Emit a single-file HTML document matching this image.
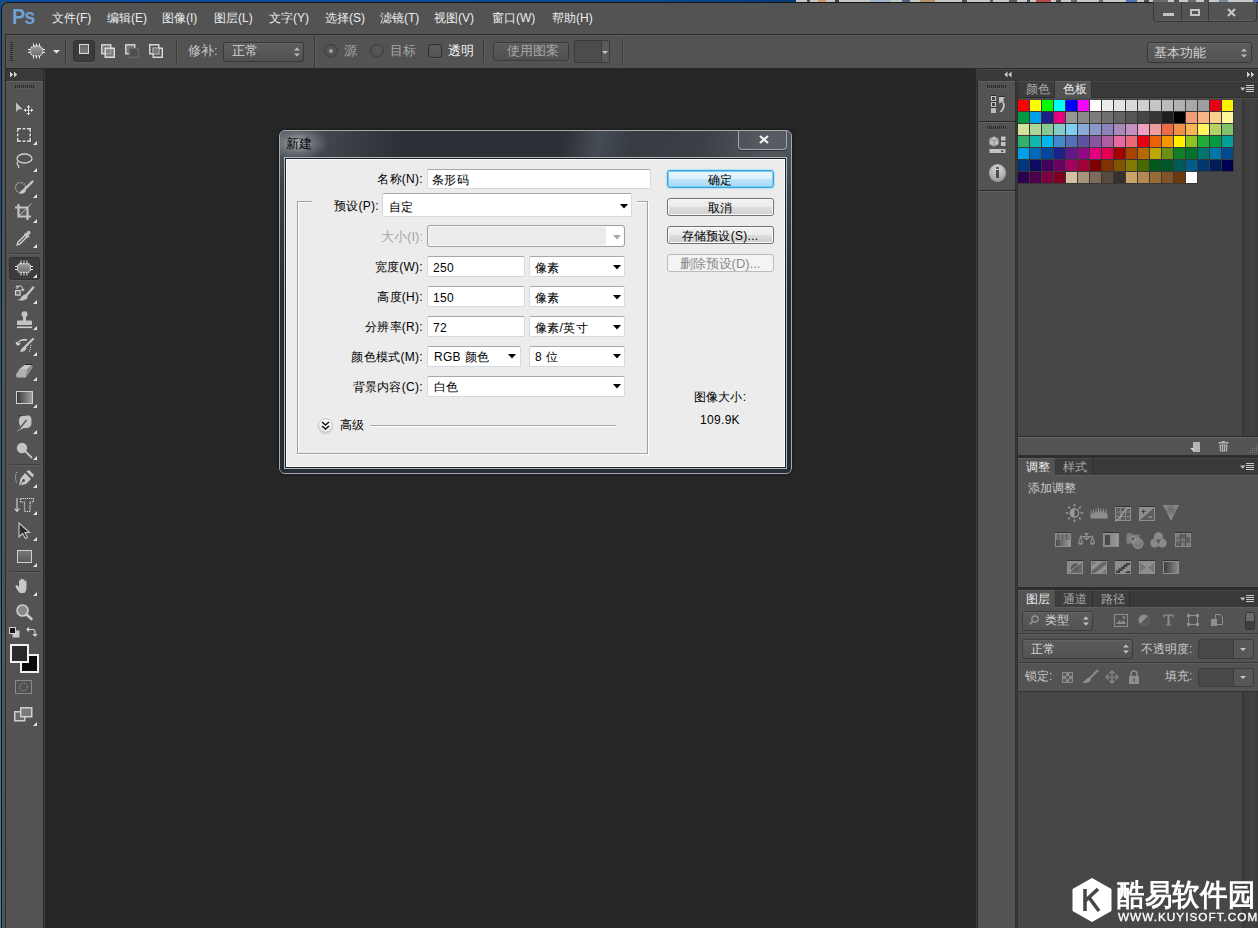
<!DOCTYPE html><html><head><meta charset="utf-8"><style>
*{margin:0;padding:0;box-sizing:border-box}
html,body{width:1258px;height:928px;overflow:hidden;background:#535353}
body{position:relative;font-family:"Liberation Sans",sans-serif;font-size:12px;color:#ddd}
div{position:absolute}
.t{white-space:nowrap;line-height:14px;font-size:13px}
svg{position:absolute;overflow:visible}
</style></head><body>
<div style="left:0px;top:0px;width:796px;height:2px;background:linear-gradient(90deg,#0b4f9c,#0a4a94 80%,#073a78)"></div>
<div style="left:796px;top:0px;width:462px;height:2px;background:#c8c8c8"></div>
<div style="left:807px;top:0px;width:3px;height:2px;background:#333;opacity:0.8"></div>
<div style="left:818px;top:0px;width:8px;height:2px;background:#c89050;opacity:0.8"></div>
<div style="left:835px;top:0px;width:4px;height:2px;background:#222;opacity:0.8"></div>
<div style="left:870px;top:0px;width:21px;height:2px;background:#9ab0c8;opacity:0.8"></div>
<div style="left:902px;top:0px;width:8px;height:2px;background:#3a4a70;opacity:0.8"></div>
<div style="left:920px;top:0px;width:15px;height:2px;background:#b08850;opacity:0.8"></div>
<div style="left:962px;top:0px;width:5px;height:2px;background:#333;opacity:0.8"></div>
<div style="left:990px;top:0px;width:3px;height:2px;background:#444;opacity:0.8"></div>
<div style="left:1009px;top:0px;width:8px;height:2px;background:#444;opacity:0.8"></div>
<div style="left:1027px;top:0px;width:3px;height:2px;background:#333;opacity:0.8"></div>
<div style="left:1036px;top:0px;width:15px;height:2px;background:#b03030;opacity:0.8"></div>
<div style="left:1056px;top:0px;width:5px;height:2px;background:#333;opacity:0.8"></div>
<div style="left:1071px;top:0px;width:6px;height:2px;background:#555;opacity:0.8"></div>
<div style="left:1099px;top:0px;width:4px;height:2px;background:#555;opacity:0.8"></div>
<div style="left:1126px;top:0px;width:11px;height:2px;background:#3060b0;opacity:0.8"></div>
<div style="left:1144px;top:0px;width:5px;height:2px;background:#333;opacity:0.8"></div>
<div style="left:1153px;top:0px;width:15px;height:2px;background:#555;opacity:0.8"></div>
<div style="left:1174px;top:0px;width:5px;height:2px;background:#333;opacity:0.8"></div>
<div style="left:1188px;top:0px;width:8px;height:2px;background:#555;opacity:0.8"></div>
<div style="left:1204px;top:0px;width:5px;height:2px;background:#333;opacity:0.8"></div>
<div style="left:1219px;top:0px;width:9px;height:2px;background:#6a7a90;opacity:0.8"></div>
<div style="left:1253px;top:0px;width:5px;height:2px;background:#3060b0;opacity:0.8"></div>
<div style="left:0px;top:0px;width:2px;height:928px;background:linear-gradient(180deg,#0b4f9c,#1a6490 50%,#3a8a98)"></div>
<div style="left:1px;top:2px;width:1257px;height:926px;background:#141414;border-top-left-radius:7px"></div>
<div style="left:2px;top:3px;width:1256px;height:925px;background:#535353;border-top-left-radius:6px"></div>
<div class="t" style="left:12px;top:6px;font:bold 22px/22px 'Liberation Sans',sans-serif;color:#6ea2d6;letter-spacing:-1px;transform:scaleX(0.9);transform-origin:0 0">Ps</div>
<div class="t" style="left:52px;top:11px;color:#ececec;font-size:12px;top:11px">文件(F)</div>
<div class="t" style="left:107px;top:11px;color:#ececec;font-size:12px;top:11px">编辑(E)</div>
<div class="t" style="left:162px;top:11px;color:#ececec;font-size:12px;top:11px">图像(I)</div>
<div class="t" style="left:214px;top:11px;color:#ececec;font-size:12px;top:11px">图层(L)</div>
<div class="t" style="left:269px;top:11px;color:#ececec;font-size:12px;top:11px">文字(Y)</div>
<div class="t" style="left:325px;top:11px;color:#ececec;font-size:12px;top:11px">选择(S)</div>
<div class="t" style="left:380px;top:11px;color:#ececec;font-size:12px;top:11px">滤镜(T)</div>
<div class="t" style="left:434px;top:11px;color:#ececec;font-size:12px;top:11px">视图(V)</div>
<div class="t" style="left:492px;top:11px;color:#ececec;font-size:12px;top:11px">窗口(W)</div>
<div class="t" style="left:552px;top:11px;color:#ececec;font-size:12px;top:11px">帮助(H)</div>
<div style="left:1153px;top:2px;width:104px;height:20px;border:1px solid #383838;border-top:none;border-radius:0 0 4px 4px;background:#535353;box-shadow:inset 0 -1px 0 #5e5e5e"></div>
<div style="left:1181px;top:2px;width:1px;height:19px;background:#383838"></div>
<div style="left:1208px;top:2px;width:1px;height:19px;background:#383838"></div>
<div style="left:1163px;top:13px;width:11px;height:3px;background:#c4c4c4"></div>
<div style="left:1190px;top:9px;width:10px;height:7px;border:2px solid #c4c4c4"></div>
<svg style="left:1227px;top:8px;" width="9" height="9" viewBox="0 0 9 9"><path d="M1 1L8 8M8 1L1 8" stroke="#c4c4c4" stroke-width="2.2"/></svg>
<div style="left:5px;top:34px;width:1253px;height:35px;background:#535353;border-top:1px solid #2a2a2a;border-left:1px solid #2a2a2a;box-shadow:inset 1px 1px 0 #5c5c5c"></div>
<div style="left:5px;top:68px;width:1253px;height:1px;background:#2a2a2a"></div>
<svg style="left:10px;top:42px;" width="3" height="20" viewBox="0 0 3 20"><rect x="0" y="0" width="3" height="1" fill="#2e2e2e"/><rect x="0" y="2" width="3" height="1" fill="#2e2e2e"/><rect x="0" y="4" width="3" height="1" fill="#2e2e2e"/><rect x="0" y="6" width="3" height="1" fill="#2e2e2e"/><rect x="0" y="8" width="3" height="1" fill="#2e2e2e"/><rect x="0" y="10" width="3" height="1" fill="#2e2e2e"/><rect x="0" y="12" width="3" height="1" fill="#2e2e2e"/><rect x="0" y="14" width="3" height="1" fill="#2e2e2e"/><rect x="0" y="16" width="3" height="1" fill="#2e2e2e"/><rect x="0" y="18" width="3" height="1" fill="#2e2e2e"/></svg>
<svg style="left:28px;top:43px;" width="17" height="16" viewBox="0 0 17 16"><defs><linearGradient id="pg" x1="0" y1="0" x2="0" y2="1"><stop offset="0" stop-color="#9a9a9a"/><stop offset="1" stop-color="#6e6e6e"/></linearGradient></defs><rect x="2.2" y="3.2" width="12.6" height="9.6" rx="4.3" fill="url(#pg)" stroke="#e6e6e6" stroke-width="1.2" stroke-dasharray="1.6 0.9"/><path d="M5.5 0.5v2.6M8.5 0.5v2.6M11.5 0.5v2.6M5.5 12.9v2.6M8.5 12.9v2.6M11.5 12.9v2.6M0 6.5h2.2M0 9.5h2.2M14.8 6.5h2.2M14.8 9.5h2.2" stroke="#ececec" stroke-width="1"/></svg>
<svg style="left:53px;top:50px;" width="7" height="4" viewBox="0 0 7 4"><path d="M0 0h7l-3.5 3.5z" fill="#e6e6e6"/></svg>
<div style="left:65px;top:40px;width:1px;height:23px;background:#3a3a3a;box-shadow:1px 0 0 #5e5e5e"></div>
<div style="left:73px;top:40px;width:22px;height:22px;background:#3b3b3b;border:1px solid #333;border-radius:3px;box-shadow:0 1px 0 #5e5e5e"></div>
<div style="left:79px;top:44px;width:10px;height:10px;background:linear-gradient(#6a6a6a,#7a7a7a);border:1.5px solid #dadada"></div>
<svg style="left:101px;top:44px;" width="14" height="14" viewBox="0 0 14 14"><rect x="0.75" y="0.75" width="9" height="9" fill="#7a7a7a" stroke="#cfcfcf" stroke-width="1.5"/><rect x="4.25" y="4.25" width="9" height="9" fill="#8a8a8a" fill-opacity="0.7" stroke="#dcdcdc" stroke-width="1.5"/></svg>
<svg style="left:125px;top:44px;" width="14" height="14" viewBox="0 0 14 14"><rect x="0.75" y="0.75" width="9" height="9" fill="#777" stroke="#d0d0d0" stroke-width="1.5"/><rect x="4.25" y="4.25" width="9" height="9" fill="#4e4e4e" stroke="#6e6e6e" stroke-width="1.2"/></svg>
<svg style="left:149px;top:44px;" width="14" height="14" viewBox="0 0 14 14"><rect x="0.75" y="0.75" width="9" height="9" fill="none" stroke="#d6d6d6" stroke-width="1.5"/><rect x="4.25" y="4.25" width="9" height="9" fill="none" stroke="#d6d6d6" stroke-width="1.5"/><rect x="4.25" y="4.25" width="5.5" height="5.5" fill="#7a7a7a"/></svg>
<div style="left:176px;top:40px;width:1px;height:23px;background:#3a3a3a;box-shadow:1px 0 0 #5e5e5e"></div>
<div class="t" style="left:188px;top:44px;color:#c6c6c6;top:44px">修补:</div>
<div style="left:223px;top:42px;width:81px;height:20px;background:linear-gradient(#5e5e5e,#505050);border:1px solid #383838;border-radius:3px;box-shadow:inset 0 1px 0 #666"></div>
<div class="t" style="left:232px;top:44px;color:#d4d4d4;top:44px">正常</div>
<svg style="left:294px;top:47px;" width="6" height="10" viewBox="0 0 6 10"><path d="M0 3.5L3 0.5L6 3.5z M0 6.5L3 9.5L6 6.5z" fill="#bdbdbd"/></svg>
<div style="left:314px;top:35px;width:1px;height:33px;background:#3a3a3a;box-shadow:1px 0 0 #5e5e5e"></div>
<div style="left:324px;top:44px;width:14px;height:14px;border-radius:50%;background:radial-gradient(circle at 50% 40%,#5a5a5a,#4a4a4a);border:1px solid #3c3c3c;box-shadow:0 1px 0 #5e5e5e"></div>
<div style="left:329px;top:49px;width:4px;height:4px;border-radius:50%;background:#a0a0a0"></div>
<div class="t" style="left:344px;top:44px;color:#a6a6a6;top:44px">源</div>
<div style="left:370px;top:44px;width:14px;height:14px;border-radius:50%;background:radial-gradient(circle at 50% 40%,#5a5a5a,#4a4a4a);border:1px solid #3c3c3c;box-shadow:0 1px 0 #5e5e5e"></div>
<div class="t" style="left:390px;top:44px;color:#a6a6a6;top:44px">目标</div>
<div style="left:428px;top:44px;width:14px;height:14px;background:linear-gradient(#5c5c5c,#545454);border:1px solid #2e2e2e;border-radius:3px;box-shadow:0 1px 0 #606060"></div>
<div class="t" style="left:448px;top:44px;color:#f4f4f4;top:44px">透明</div>
<div style="left:483px;top:40px;width:1px;height:23px;background:#3a3a3a;box-shadow:1px 0 0 #5e5e5e"></div>
<div style="left:493px;top:42px;width:76px;height:19px;background:linear-gradient(#5a5a5a,#505050);border:1px solid #3a3a3a;border-radius:3px;box-shadow:inset 0 1px 0 #626262"></div>
<div class="t" style="left:507px;top:44px;color:#a8a8a8;top:44px">使用图案</div>
<div style="left:574px;top:40px;width:36px;height:23px;background:#4c4c4c;border:1px solid #3a3a3a;border-radius:2px"></div>
<div style="left:601px;top:41px;width:8px;height:21px;background:#5a5a5a;border-left:1px solid #3e3e3e"></div>
<svg style="left:602px;top:51px;" width="6" height="3" viewBox="0 0 6 3"><path d="M0 0h6l-3 3z" fill="#c8c8c8"/></svg>
<div style="left:622px;top:38px;width:1px;height:28px;background:#3a3a3a;box-shadow:1px 0 0 #5e5e5e"></div>
<div style="left:1147px;top:42px;width:105px;height:21px;background:linear-gradient(#5e5e5e,#525252);border:1px solid #383838;border-radius:3px;box-shadow:inset 0 1px 0 #666"></div>
<div class="t" style="left:1154px;top:45px;color:#d4d4d4;top:46px">基本功能</div>
<svg style="left:1241px;top:48px;" width="6" height="10" viewBox="0 0 6 10"><path d="M0 3.5L3 0.5L6 3.5z M0 6.5L3 9.5L6 6.5z" fill="#bdbdbd"/></svg>
<div style="left:2px;top:69px;width:3px;height:859px;background:#535353"></div>
<div style="left:5px;top:69px;width:40px;height:859px;background:#2c2c2c"></div>
<div style="left:6px;top:69px;width:37px;height:12px;background:#3a3a3a;border-radius:2px"></div>
<svg style="left:10px;top:71px;" width="8" height="7" viewBox="0 0 8 7"><path d="M0 0L3.5 3.3L0 6.6z M4 0L7.5 3.3L4 6.6z" fill="#cfcfcf"/><path d="M0 0L3.5 3.3M4 0L7.5 3.3" stroke="#151515" stroke-width="0.8"/></svg>
<div style="left:6px;top:81px;width:37px;height:847px;background:#535353;border-top:1px solid #626262"></div>
<svg style="left:15px;top:85px;" width="20" height="4" viewBox="0 0 20 4"><rect x="0" y="0" width="1" height="3" fill="#2a2a2a"/><rect x="0" y="3" width="1" height="1" fill="#626262"/><rect x="2" y="0" width="1" height="3" fill="#2a2a2a"/><rect x="2" y="3" width="1" height="1" fill="#626262"/><rect x="4" y="0" width="1" height="3" fill="#2a2a2a"/><rect x="4" y="3" width="1" height="1" fill="#626262"/><rect x="6" y="0" width="1" height="3" fill="#2a2a2a"/><rect x="6" y="3" width="1" height="1" fill="#626262"/><rect x="8" y="0" width="1" height="3" fill="#2a2a2a"/><rect x="8" y="3" width="1" height="1" fill="#626262"/><rect x="10" y="0" width="1" height="3" fill="#2a2a2a"/><rect x="10" y="3" width="1" height="1" fill="#626262"/><rect x="12" y="0" width="1" height="3" fill="#2a2a2a"/><rect x="12" y="3" width="1" height="1" fill="#626262"/><rect x="14" y="0" width="1" height="3" fill="#2a2a2a"/><rect x="14" y="3" width="1" height="1" fill="#626262"/><rect x="16" y="0" width="1" height="3" fill="#2a2a2a"/><rect x="16" y="3" width="1" height="1" fill="#626262"/><rect x="18" y="0" width="1" height="3" fill="#2a2a2a"/><rect x="18" y="3" width="1" height="1" fill="#626262"/></svg>
<div style="left:45px;top:69px;width:929px;height:859px;background:#262626"></div>
<div style="left:44px;top:69px;width:1px;height:859px;background:#383838"></div>
<div style="left:45px;top:69px;width:1px;height:859px;background:#2a2a2a"></div>
<svg style="left:15px;top:101px;" width="19" height="15" viewBox="0 0 19 15"><path d="M1 0.5L1 11L3.8 8.2L8.5 8.2z" fill="#bdbdbd"/><path d="M1 0.5L8.5 8.2" stroke="#1e1e1e" stroke-width="0.9"/><path d="M13.5 4.5V14M9 9.25H18" stroke="#1e1e1e" stroke-width="2.4" opacity="0.5"/><path d="M13.5 4.5V14M9 9.25H18" stroke="#e4e4e4" stroke-width="1"/><path d="M11.5 6.5L13.5 4.3L15.5 6.5zM11.5 12L13.5 14.2L15.5 12zM11 7.25L8.8 9.25L11 11.25zM16 7.25L18.2 9.25L16 11.25z" fill="#e4e4e4"/></svg>
<svg style="left:17px;top:128px;" width="14" height="14" viewBox="0 0 14 14"><path d="M0.75 4V0.75H4M10 0.75H13.25V4M13.25 10V13.25H10M4 13.25H0.75V10M5.5 0.75H8.5M5.5 13.25H8.5M0.75 5.5V8.5M13.25 5.5V8.5" fill="none" stroke="#1a1a1a" stroke-width="1.5" transform="translate(0.6,0.6)" opacity="0.6"/><path d="M0.75 4V0.75H4M10 0.75H13.25V4M13.25 10V13.25H10M4 13.25H0.75V10M5.5 0.75H8.5M5.5 13.25H8.5M0.75 5.5V8.5M13.25 5.5V8.5" fill="none" stroke="#dedede" stroke-width="1.5"/></svg>
<svg style="left:33px;top:141px;" width="4" height="4" viewBox="0 0 4 4"><path d="M4 0V4H0z" fill="#e4e4e4"/></svg>
<svg style="left:15px;top:153px;" width="18" height="16" viewBox="0 0 18 16"><ellipse cx="9.5" cy="5.5" rx="7.5" ry="4.5" fill="none" stroke="#cfcfcf" stroke-width="1.3"/><path d="M3 9C1.5 10 2 12 3.5 12.5C4.5 13 3.5 14.5 3 15" fill="none" stroke="#cfcfcf" stroke-width="1.2"/></svg>
<svg style="left:33px;top:168px;" width="4" height="4" viewBox="0 0 4 4"><path d="M4 0V4H0z" fill="#e4e4e4"/></svg>
<svg style="left:15px;top:180px;" width="19" height="15" viewBox="0 0 19 15"><circle cx="5.5" cy="7.5" r="5" fill="none" stroke="#d0d0d0" stroke-width="1.2" stroke-dasharray="1 1.2"/><path d="M17.5 1.5L9.5 9.5" stroke="#c8c8c8" stroke-width="2.4" stroke-linecap="round"/><path d="M9.5 9C7 9 5 11.5 4.5 14C7.5 14 10 13 11 11z" fill="#c8c8c8"/></svg>
<svg style="left:33px;top:194px;" width="4" height="4" viewBox="0 0 4 4"><path d="M4 0V4H0z" fill="#e4e4e4"/></svg>
<svg style="left:15px;top:204px;" width="17" height="16" viewBox="0 0 17 16"><rect x="5" y="4.5" width="6.5" height="6.5" fill="#5e5e5e"/><path d="M3.5 0V12.5H16M0 3.5H12.5V16" fill="none" stroke="#c4c4c4" stroke-width="2.2"/><path d="M4.5 11.5L16.5 -0.5" stroke="#c4c4c4" stroke-width="0.9"/></svg>
<svg style="left:33px;top:219px;" width="4" height="4" viewBox="0 0 4 4"><path d="M4 0V4H0z" fill="#e4e4e4"/></svg>
<svg style="left:16px;top:230px;" width="15" height="16" viewBox="0 0 15 16"><path d="M1 15L2 12L9 5L11 7L4 14z" fill="#6a6a6a" stroke="#e0e0e0" stroke-width="1.1"/><path d="M8 4L12 8L13.5 6.5L12.5 5.5L14 4C15 3 14.5 1.5 13.5 1C12.5 0.5 11.5 1 11 2L9.5 3.5L9 3z" fill="#c0c0c0"/></svg>
<svg style="left:33px;top:244px;" width="4" height="4" viewBox="0 0 4 4"><path d="M4 0V4H0z" fill="#e4e4e4"/></svg>
<div style="left:10px;top:253px;width:31px;height:1px;background:#3e3e3e;box-shadow:0 1px 0 #5e5e5e"></div>
<div style="left:9px;top:257px;width:31px;height:23px;background:#3c3c3c;border:1px solid #323232;border-radius:3px;box-shadow:0 1px 0 #5e5e5e"></div>
<svg style="left:15px;top:260px;" width="18" height="16" viewBox="0 0 18 16"><rect x="2.6" y="3.6" width="12.8" height="8.8" rx="3" fill="url(#pg)" stroke="#e0e0e0" stroke-width="1.2" stroke-dasharray="1.5 0.9"/><path d="M6 0.5v3M9 0.5v3M12 0.5v3M6 12.5v3M9 12.5v3M12 12.5v3M0 6.5h2.6M0 9.5h2.6M15.4 6.5h2.6M15.4 9.5h2.6" stroke="#e6e6e6" stroke-width="1"/></svg>
<svg style="left:33px;top:274px;" width="4" height="4" viewBox="0 0 4 4"><path d="M4 0V4H0z" fill="#e4e4e4"/></svg>
<svg style="left:15px;top:285px;" width="19" height="17" viewBox="0 0 19 17"><rect x="0.6" y="5.6" width="4.5" height="4.5" fill="#6a6a6a" stroke="#dedede" stroke-width="1.1"/><path d="M2 4C2 1.8 3.5 0.8 5.5 1C7 1.2 7.8 2.5 7.8 5" fill="none" stroke="#dedede" stroke-width="1"/><path d="M6.3 4L7.8 6L9.3 4" fill="none" stroke="#dedede" stroke-width="1"/><path d="M1 2.5L2 0.5L3.5 2.5" fill="none" stroke="#dedede" stroke-width="0.8"/><path d="M18.2 2.5L11.8 10" stroke="#c4c4c4" stroke-width="2.4" stroke-linecap="round"/><path d="M11.8 9.8C9.5 9 7 10.8 6 12.8C5.3 14 4.3 14.8 2.3 15C6.5 16.3 10.8 15.6 12.8 12.5z" fill="#c4c4c4"/></svg>
<svg style="left:33px;top:300px;" width="4" height="4" viewBox="0 0 4 4"><path d="M4 0V4H0z" fill="#e4e4e4"/></svg>
<svg style="left:16px;top:311px;" width="17" height="18" viewBox="0 0 17 18"><circle cx="8.5" cy="3.2" r="3" fill="#c4c4c4"/><path d="M7 5.5H10V9.5H14.5C15.5 9.5 16 10 16 11V14H1V11C1 10 1.5 9.5 2.5 9.5H7z" fill="#c4c4c4"/><rect x="1" y="15.5" width="15" height="1.6" fill="#d0d0d0"/></svg>
<svg style="left:33px;top:326px;" width="4" height="4" viewBox="0 0 4 4"><path d="M4 0V4H0z" fill="#e4e4e4"/></svg>
<svg style="left:15px;top:338px;" width="19" height="15" viewBox="0 0 19 15"><path d="M12 2C7 1 3 3 2.5 6M1 4L2.5 7L5.5 5.5" fill="none" stroke="#dedede" stroke-width="1.3"/><path d="M18 1L10 9" stroke="#c8c8c8" stroke-width="2.2" stroke-linecap="round"/><path d="M10 8.5C7.5 8.5 6 11 5 14C8 14 10.5 13 11.5 10.5z" fill="#c8c8c8"/><path d="M16 7L14.5 14" stroke="#e0e0e0" stroke-width="1" stroke-dasharray="1 1"/></svg>
<svg style="left:33px;top:352px;" width="4" height="4" viewBox="0 0 4 4"><path d="M4 0V4H0z" fill="#e4e4e4"/></svg>
<svg style="left:15px;top:364px;" width="18" height="14" viewBox="0 0 18 14"><path d="M4.5 5L10 0.5H17.5L12.5 5z" fill="#c8c8c8"/><path d="M4.5 5H12.5L11 13.5H1.5L1 10.5z" fill="#b0b0b0"/><path d="M12.5 5L17.5 0.5V4L11 13.5z" fill="#8e8e8e"/><path d="M10 0.5H17.5" stroke="#222" stroke-width="1"/></svg>
<svg style="left:33px;top:377px;" width="4" height="4" viewBox="0 0 4 4"><path d="M4 0V4H0z" fill="#e4e4e4"/></svg>
<div style="left:16px;top:391px;width:17px;height:13px;border:1px solid #cfcfcf;background:linear-gradient(90deg,#3a3a3a,#a0a0a0)"></div>
<svg style="left:33px;top:404px;" width="4" height="4" viewBox="0 0 4 4"><path d="M4 0V4H0z" fill="#e4e4e4"/></svg>
<svg style="left:16px;top:415px;" width="16" height="17" viewBox="0 0 16 17"><path d="M3 6C3 2 5 0.5 9 0.5H12C14.5 0.5 15.5 2 15.5 5V8C15.5 11 13.5 13 10 13H8L1 16.5L4.5 11C3.5 10 3 8.5 3 6z" fill="#c4c4c4"/><path d="M10.5 5L2.5 15" stroke="#535353" stroke-width="1.3"/><path d="M2 0.5H10" stroke="#222" stroke-width="0.8" opacity="0.6"/></svg>
<svg style="left:33px;top:430px;" width="4" height="4" viewBox="0 0 4 4"><path d="M4 0V4H0z" fill="#e4e4e4"/></svg>
<svg style="left:16px;top:442px;" width="17" height="17" viewBox="0 0 17 17"><circle cx="6" cy="6" r="5.2" fill="#c4c4c4"/><path d="M9.5 9.5L15.5 15.5" stroke="#c4c4c4" stroke-width="1.8" stroke-linecap="round"/></svg>
<svg style="left:33px;top:456px;" width="4" height="4" viewBox="0 0 4 4"><path d="M4 0V4H0z" fill="#e4e4e4"/></svg>
<div style="left:10px;top:464px;width:31px;height:1px;background:#3e3e3e;box-shadow:0 1px 0 #5e5e5e"></div>
<svg style="left:14px;top:470px;" width="20" height="17" viewBox="0 0 20 17"><path d="M11 3L17 9L12 14L5 15.5L6.5 8.5z" fill="#c8c8c8"/><path d="M12.5 1.5L15 0L20 5L18.5 7.5z" fill="#c8c8c8"/><circle cx="9.5" cy="10.5" r="1.5" fill="#535353"/><path d="M6 15L9.5 10.5" stroke="#535353" stroke-width="0.8"/><path d="M3 2C1 5 1 9 3 13" stroke="#d8d8d8" stroke-width="1" stroke-dasharray="1 1.2" fill="none"/></svg>
<svg style="left:33px;top:484px;" width="4" height="4" viewBox="0 0 4 4"><path d="M4 0V4H0z" fill="#e4e4e4"/></svg>
<svg style="left:14px;top:497px;" width="21" height="16" viewBox="0 0 21 16"><path d="M3 1V14M0.5 11.5L3 14.5L5.5 11.5" fill="none" stroke="#d8d8d8" stroke-width="1.1"/><path d="M6.5 1.5H19.5V5H16V14.5H10.5V5H6.5Z" fill="none" stroke="#d8d8d8" stroke-width="1.2" stroke-dasharray="1.3 0.8"/></svg>
<svg style="left:33px;top:511px;" width="4" height="4" viewBox="0 0 4 4"><path d="M4 0V4H0z" fill="#e4e4e4"/></svg>
<svg style="left:18px;top:522px;" width="12" height="17" viewBox="0 0 12 17"><path d="M1 1V15L4.5 11.5L7.5 16.5L9.5 15.5L7 10.5H11.5z" fill="#2a2a2a" stroke="#c8c8c8" stroke-width="1.1"/></svg>
<svg style="left:33px;top:537px;" width="4" height="4" viewBox="0 0 4 4"><path d="M4 0V4H0z" fill="#e4e4e4"/></svg>
<div style="left:17px;top:550px;width:15px;height:13px;border:1.2px solid #cfcfcf;background:linear-gradient(#777,#5c5c5c)"></div>
<svg style="left:33px;top:563px;" width="4" height="4" viewBox="0 0 4 4"><path d="M4 0V4H0z" fill="#e4e4e4"/></svg>
<div style="left:10px;top:571px;width:31px;height:1px;background:#3e3e3e;box-shadow:0 1px 0 #5e5e5e"></div>
<svg style="left:15px;top:578px;" width="18" height="16" viewBox="0 0 18 16"><path d="M5 15C3 13 1 10.5 0.5 8.5C0.5 7.5 1.5 7 2.5 7.5L4 9V3C4 2 5.5 2 5.5 3V7.5V1.5C5.5 0.5 7.5 0.5 7.5 1.5V7.5V2C7.5 1 9.5 1 9.5 2V8V3.5C9.5 2.5 11.5 2.5 11.5 3.5V9.5C11.5 12 10.5 14 9.5 15z" fill="#c8c8c8"/></svg>
<svg style="left:33px;top:592px;" width="4" height="4" viewBox="0 0 4 4"><path d="M4 0V4H0z" fill="#e4e4e4"/></svg>
<svg style="left:16px;top:604px;" width="17" height="16" viewBox="0 0 17 16"><circle cx="6.5" cy="6.5" r="5.5" fill="#888" stroke="#cfcfcf" stroke-width="1.6"/><path d="M10.5 10.5L15.5 15" stroke="#cfcfcf" stroke-width="2.6" stroke-linecap="round"/></svg>
<svg style="left:9px;top:627px;" width="11" height="11" viewBox="0 0 11 11"><rect x="3.5" y="3.5" width="7" height="7" fill="#c8c8c8"/><rect x="0.5" y="0.5" width="6" height="6" fill="#1a1a1a" stroke="#d0d0d0" stroke-width="1"/></svg>
<svg style="left:26px;top:626px;" width="11" height="11" viewBox="0 0 11 11"><path d="M1 3.5H7C8.5 3.5 9 4 9 5.5V10M3 1.5L1 3.5L3 5.5M7 8L9 10L11 8" fill="none" stroke="#d8d8d8" stroke-width="1.1"/></svg>
<div style="left:20px;top:654px;width:19px;height:19px;background:#0a0a0a;border:2px solid #f2f2f2"></div>
<div style="left:10px;top:644px;width:19px;height:19px;background:#2a2a2a;border:2px solid #f2f2f2"></div>
<div style="left:15px;top:680px;width:17px;height:14px;border:1px solid #8a8a8a;background:#505050"></div>
<svg style="left:18px;top:682px;" width="11" height="10" viewBox="0 0 11 10"><circle cx="5.5" cy="5" r="3.8" fill="none" stroke="#a8a8a8" stroke-width="1" stroke-dasharray="1 1"/></svg>
<svg style="left:14px;top:707px;" width="19" height="15" viewBox="0 0 19 15"><rect x="0.75" y="4.75" width="10" height="9" fill="#6a6a6a" stroke="#cfcfcf" stroke-width="1.5"/><rect x="6.75" y="0.75" width="11" height="9" fill="#7a7a7a" stroke="#cfcfcf" stroke-width="1.5"/></svg>
<svg style="left:33px;top:722px;" width="4" height="4" viewBox="0 0 4 4"><path d="M4 0V4H0z" fill="#e4e4e4"/></svg>
<div style="left:974px;top:69px;width:284px;height:859px;background:#2a2a2a"></div>
<div style="left:974px;top:69px;width:2px;height:859px;background:#282828"></div>
<div style="left:976px;top:69px;width:1px;height:859px;background:#383838"></div>
<div style="left:977px;top:69px;width:281px;height:12px;background:#393939;border-top:1px solid #474747"></div>
<svg style="left:1004px;top:71px;" width="8" height="7" viewBox="0 0 8 7"><path d="M3.5 0L0 3.3L3.5 6.6z M7.5 0L4 3.3L7.5 6.6z" fill="#cfcfcf"/><path d="M3.5 0L0 3.3M7.5 0L4 3.3" stroke="#151515" stroke-width="0.8"/></svg>
<svg style="left:1247px;top:71px;" width="8" height="7" viewBox="0 0 8 7"><path d="M0 0L3.5 3.3L0 6.6z M4 0L7.5 3.3L4 6.6z" fill="#cfcfcf"/><path d="M0 0L3.5 3.3M4 0L7.5 3.3" stroke="#151515" stroke-width="0.8"/></svg>
<div style="left:978px;top:81px;width:37px;height:40px;background:#535353;border-top:1px solid #616161"></div>
<div style="left:978px;top:122px;width:37px;height:68px;background:#535353;border-top:1px solid #616161"></div>
<div style="left:978px;top:191px;width:37px;height:737px;background:#535353;border-top:1px solid #616161"></div>
<svg style="left:987px;top:85px;" width="20" height="4" viewBox="0 0 20 4"><rect x="0" y="0" width="1" height="3" fill="#2a2a2a"/><rect x="0" y="3" width="1" height="1" fill="#616161"/><rect x="2" y="0" width="1" height="3" fill="#2a2a2a"/><rect x="2" y="3" width="1" height="1" fill="#616161"/><rect x="4" y="0" width="1" height="3" fill="#2a2a2a"/><rect x="4" y="3" width="1" height="1" fill="#616161"/><rect x="6" y="0" width="1" height="3" fill="#2a2a2a"/><rect x="6" y="3" width="1" height="1" fill="#616161"/><rect x="8" y="0" width="1" height="3" fill="#2a2a2a"/><rect x="8" y="3" width="1" height="1" fill="#616161"/><rect x="10" y="0" width="1" height="3" fill="#2a2a2a"/><rect x="10" y="3" width="1" height="1" fill="#616161"/><rect x="12" y="0" width="1" height="3" fill="#2a2a2a"/><rect x="12" y="3" width="1" height="1" fill="#616161"/><rect x="14" y="0" width="1" height="3" fill="#2a2a2a"/><rect x="14" y="3" width="1" height="1" fill="#616161"/><rect x="16" y="0" width="1" height="3" fill="#2a2a2a"/><rect x="16" y="3" width="1" height="1" fill="#616161"/><rect x="18" y="0" width="1" height="3" fill="#2a2a2a"/><rect x="18" y="3" width="1" height="1" fill="#616161"/></svg>
<svg style="left:987px;top:126px;" width="20" height="4" viewBox="0 0 20 4"><rect x="0" y="0" width="1" height="3" fill="#2a2a2a"/><rect x="0" y="3" width="1" height="1" fill="#616161"/><rect x="2" y="0" width="1" height="3" fill="#2a2a2a"/><rect x="2" y="3" width="1" height="1" fill="#616161"/><rect x="4" y="0" width="1" height="3" fill="#2a2a2a"/><rect x="4" y="3" width="1" height="1" fill="#616161"/><rect x="6" y="0" width="1" height="3" fill="#2a2a2a"/><rect x="6" y="3" width="1" height="1" fill="#616161"/><rect x="8" y="0" width="1" height="3" fill="#2a2a2a"/><rect x="8" y="3" width="1" height="1" fill="#616161"/><rect x="10" y="0" width="1" height="3" fill="#2a2a2a"/><rect x="10" y="3" width="1" height="1" fill="#616161"/><rect x="12" y="0" width="1" height="3" fill="#2a2a2a"/><rect x="12" y="3" width="1" height="1" fill="#616161"/><rect x="14" y="0" width="1" height="3" fill="#2a2a2a"/><rect x="14" y="3" width="1" height="1" fill="#616161"/><rect x="16" y="0" width="1" height="3" fill="#2a2a2a"/><rect x="16" y="3" width="1" height="1" fill="#616161"/><rect x="18" y="0" width="1" height="3" fill="#2a2a2a"/><rect x="18" y="3" width="1" height="1" fill="#616161"/></svg>
<svg style="left:990px;top:94px;" width="17" height="20" viewBox="0 0 17 20"><rect x="1" y="1" width="5" height="1" fill="#2a2a2a"/><rect x="1.5" y="2.5" width="4" height="4" fill="#444" stroke="#c8c8c8" stroke-width="1"/><rect x="1" y="7" width="5" height="1" fill="#2a2a2a"/><rect x="1.5" y="8.5" width="4" height="4" fill="#444" stroke="#c8c8c8" stroke-width="1"/><rect x="1" y="13" width="5" height="1" fill="#2a2a2a"/><rect x="1" y="14" width="5" height="5" fill="#bcbcbc"/><rect x="9" y="2" width="6" height="1" fill="#2a2a2a"/><path d="M9 3H15L13.2 5.2L14 6.5L11.5 8L9.2 9.5z" fill="#c4c4c4"/><path d="M12.5 7.5C14.5 10 14.5 14 10.5 18" fill="none" stroke="#c4c4c4" stroke-width="1.7"/></svg>
<svg style="left:989px;top:136px;" width="17" height="18" viewBox="0 0 17 18"><path d="M5 0.5L9.5 2.8V8.2L5 10.5L0.5 8.2V2.8z" fill="#c0c0c0" stroke="#888" stroke-width="0.6"/><path d="M0.5 2.8L5 5L9.5 2.8M5 5V10.5" stroke="#777" stroke-width="0.7" fill="none"/><rect x="12" y="0.5" width="4.5" height="4" fill="#c4c4c4"/><rect x="12" y="6" width="4.5" height="4" fill="#c4c4c4"/><rect x="0.5" y="13" width="16" height="4" fill="#c4c4c4"/><path d="M11.5 14.5H15L13.25 16.5z" fill="#333"/></svg>
<div style="left:989px;top:164px;width:17px;height:18px;border-radius:50%;background:radial-gradient(circle at 50% 30%,#d8d8d8,#9a9a9a 80%);"></div>
<div style="left:996px;top:167px;width:3px;height:2px;background:#4a4a4a;border-radius:1px"></div>
<div style="left:996px;top:170px;width:3px;height:8px;background:#4a4a4a"></div>
<div style="left:1015px;top:81px;width:3px;height:847px;background:linear-gradient(90deg,#2e2e2e 0,#2e2e2e 1px,#393939 1px,#393939 2px,#2e2e2e 2px)"></div>
<div style="left:1018px;top:81px;width:240px;height:17px;background:#393939;border-top:1px solid #454545"></div>
<div style="left:1018px;top:81px;width:37px;height:17px;background:#3d3d3d;border-top:1px solid #4a4a4a;border-right:1px solid #2e2e2e;border-bottom:1px solid #2e2e2e"></div>
<div style="left:1055px;top:81px;width:36px;height:18px;background:#535353;border-top:1px solid #636363"></div>
<div style="left:1091px;top:81px;width:1px;height:17px;background:#2e2e2e"></div>
<div style="left:1092px;top:97px;width:166px;height:1px;background:#2e2e2e"></div>
<div class="t" style="left:1026px;top:82px;color:#a8a8a8;font-size:12px">颜色</div>
<div class="t" style="left:1063px;top:82px;color:#ececec;font-size:12px">色板</div>
<svg style="left:1240px;top:85px;" width="14" height="8" viewBox="0 0 14 8"><path d="M0 2.5H5.5L2.75 5.8z" fill="#c0c0c0"/><path d="M6 0.5H14M6 2.5H14M6 4.5H14M6 6.5H14" stroke="#c8c8c8" stroke-width="1"/></svg>
<div style="left:1018px;top:98px;width:240px;height:1px;background:#4c4c4c"></div>
<div style="left:1018px;top:99px;width:224px;height:337px;background:#474747"></div>
<div style="left:1242px;top:99px;width:16px;height:337px;background:linear-gradient(90deg,#333 0,#333 1px,#3b3b3b 1px,#414141 45%,#414141 70%,#3b3b3b)"></div>
<div style="left:1018px;top:100px;width:216px;height:84px;background:#383838"></div>
<div style="left:1198px;top:172px;width:36px;height:12px;background:#474747"></div>
<div style="left:1018px;top:100px;width:11px;height:11px;background:#ff0000"></div>
<div style="left:1030px;top:100px;width:11px;height:11px;background:#ffff00"></div>
<div style="left:1042px;top:100px;width:11px;height:11px;background:#00ff00"></div>
<div style="left:1054px;top:100px;width:11px;height:11px;background:#00ffff"></div>
<div style="left:1066px;top:100px;width:11px;height:11px;background:#0000ff"></div>
<div style="left:1078px;top:100px;width:11px;height:11px;background:#ff00ff"></div>
<div style="left:1090px;top:100px;width:11px;height:11px;background:#ffffff"></div>
<div style="left:1102px;top:100px;width:11px;height:11px;background:#ececec"></div>
<div style="left:1114px;top:100px;width:11px;height:11px;background:#e3e3e3"></div>
<div style="left:1126px;top:100px;width:11px;height:11px;background:#d9d9d9"></div>
<div style="left:1138px;top:100px;width:11px;height:11px;background:#cfcfcf"></div>
<div style="left:1150px;top:100px;width:11px;height:11px;background:#c5c5c5"></div>
<div style="left:1162px;top:100px;width:11px;height:11px;background:#bbbbbb"></div>
<div style="left:1174px;top:100px;width:11px;height:11px;background:#b1b1b1"></div>
<div style="left:1186px;top:100px;width:11px;height:11px;background:#a7a7a7"></div>
<div style="left:1198px;top:100px;width:11px;height:11px;background:#9e9e9e"></div>
<div style="left:1210px;top:100px;width:11px;height:11px;background:#e60012"></div>
<div style="left:1222px;top:100px;width:11px;height:11px;background:#fff100"></div>
<div style="left:1018px;top:112px;width:11px;height:11px;background:#009944"></div>
<div style="left:1030px;top:112px;width:11px;height:11px;background:#00a0e9"></div>
<div style="left:1042px;top:112px;width:11px;height:11px;background:#1d2088"></div>
<div style="left:1054px;top:112px;width:11px;height:11px;background:#e4007f"></div>
<div style="left:1066px;top:112px;width:11px;height:11px;background:#959595"></div>
<div style="left:1078px;top:112px;width:11px;height:11px;background:#898989"></div>
<div style="left:1090px;top:112px;width:11px;height:11px;background:#7d7d7d"></div>
<div style="left:1102px;top:112px;width:11px;height:11px;background:#707070"></div>
<div style="left:1114px;top:112px;width:11px;height:11px;background:#626262"></div>
<div style="left:1126px;top:112px;width:11px;height:11px;background:#555555"></div>
<div style="left:1138px;top:112px;width:11px;height:11px;background:#464646"></div>
<div style="left:1150px;top:112px;width:11px;height:11px;background:#363636"></div>
<div style="left:1162px;top:112px;width:11px;height:11px;background:#1e1e1e"></div>
<div style="left:1174px;top:112px;width:11px;height:11px;background:#000000"></div>
<div style="left:1186px;top:112px;width:11px;height:11px;background:#f29c7a"></div>
<div style="left:1198px;top:112px;width:11px;height:11px;background:#f8b482"></div>
<div style="left:1210px;top:112px;width:11px;height:11px;background:#fbd08a"></div>
<div style="left:1222px;top:112px;width:11px;height:11px;background:#fff79a"></div>
<div style="left:1018px;top:124px;width:11px;height:11px;background:#d1e39c"></div>
<div style="left:1030px;top:124px;width:11px;height:11px;background:#acd598"></div>
<div style="left:1042px;top:124px;width:11px;height:11px;background:#89c997"></div>
<div style="left:1054px;top:124px;width:11px;height:11px;background:#84ccc9"></div>
<div style="left:1066px;top:124px;width:11px;height:11px;background:#7ecef4"></div>
<div style="left:1078px;top:124px;width:11px;height:11px;background:#88abda"></div>
<div style="left:1090px;top:124px;width:11px;height:11px;background:#8c97cb"></div>
<div style="left:1102px;top:124px;width:11px;height:11px;background:#8f82bc"></div>
<div style="left:1114px;top:124px;width:11px;height:11px;background:#aa89bd"></div>
<div style="left:1126px;top:124px;width:11px;height:11px;background:#c490bf"></div>
<div style="left:1138px;top:124px;width:11px;height:11px;background:#f19ec2"></div>
<div style="left:1150px;top:124px;width:11px;height:11px;background:#f29b9b"></div>
<div style="left:1162px;top:124px;width:11px;height:11px;background:#ee6b47"></div>
<div style="left:1174px;top:124px;width:11px;height:11px;background:#f19149"></div>
<div style="left:1186px;top:124px;width:11px;height:11px;background:#f8b551"></div>
<div style="left:1198px;top:124px;width:11px;height:11px;background:#fff45c"></div>
<div style="left:1210px;top:124px;width:11px;height:11px;background:#b3d465"></div>
<div style="left:1222px;top:124px;width:11px;height:11px;background:#80c269"></div>
<div style="left:1018px;top:136px;width:11px;height:11px;background:#32b16c"></div>
<div style="left:1030px;top:136px;width:11px;height:11px;background:#13b5b1"></div>
<div style="left:1042px;top:136px;width:11px;height:11px;background:#00b7ee"></div>
<div style="left:1054px;top:136px;width:11px;height:11px;background:#448aca"></div>
<div style="left:1066px;top:136px;width:11px;height:11px;background:#556fb5"></div>
<div style="left:1078px;top:136px;width:11px;height:11px;background:#5f52a0"></div>
<div style="left:1090px;top:136px;width:11px;height:11px;background:#8957a1"></div>
<div style="left:1102px;top:136px;width:11px;height:11px;background:#ad5da1"></div>
<div style="left:1114px;top:136px;width:11px;height:11px;background:#ea68a2"></div>
<div style="left:1126px;top:136px;width:11px;height:11px;background:#eb6877"></div>
<div style="left:1138px;top:136px;width:11px;height:11px;background:#e60012"></div>
<div style="left:1150px;top:136px;width:11px;height:11px;background:#eb6100"></div>
<div style="left:1162px;top:136px;width:11px;height:11px;background:#f39800"></div>
<div style="left:1174px;top:136px;width:11px;height:11px;background:#fff100"></div>
<div style="left:1186px;top:136px;width:11px;height:11px;background:#8fc31f"></div>
<div style="left:1198px;top:136px;width:11px;height:11px;background:#22ac38"></div>
<div style="left:1210px;top:136px;width:11px;height:11px;background:#009944"></div>
<div style="left:1222px;top:136px;width:11px;height:11px;background:#009e96"></div>
<div style="left:1018px;top:148px;width:11px;height:11px;background:#00a0e9"></div>
<div style="left:1030px;top:148px;width:11px;height:11px;background:#0068b7"></div>
<div style="left:1042px;top:148px;width:11px;height:11px;background:#00479d"></div>
<div style="left:1054px;top:148px;width:11px;height:11px;background:#1d2088"></div>
<div style="left:1066px;top:148px;width:11px;height:11px;background:#601986"></div>
<div style="left:1078px;top:148px;width:11px;height:11px;background:#920783"></div>
<div style="left:1090px;top:148px;width:11px;height:11px;background:#e4007f"></div>
<div style="left:1102px;top:148px;width:11px;height:11px;background:#e5004f"></div>
<div style="left:1114px;top:148px;width:11px;height:11px;background:#a40000"></div>
<div style="left:1126px;top:148px;width:11px;height:11px;background:#a84200"></div>
<div style="left:1138px;top:148px;width:11px;height:11px;background:#b36b00"></div>
<div style="left:1150px;top:148px;width:11px;height:11px;background:#bba800"></div>
<div style="left:1162px;top:148px;width:11px;height:11px;background:#6a8f15"></div>
<div style="left:1174px;top:148px;width:11px;height:11px;background:#0f7f2a"></div>
<div style="left:1186px;top:148px;width:11px;height:11px;background:#00732f"></div>
<div style="left:1198px;top:148px;width:11px;height:11px;background:#007570"></div>
<div style="left:1210px;top:148px;width:11px;height:11px;background:#0076ab"></div>
<div style="left:1222px;top:148px;width:11px;height:11px;background:#004a8d"></div>
<div style="left:1018px;top:160px;width:11px;height:11px;background:#00367a"></div>
<div style="left:1030px;top:160px;width:11px;height:11px;background:#0e0a5f"></div>
<div style="left:1042px;top:160px;width:11px;height:11px;background:#42005f"></div>
<div style="left:1054px;top:160px;width:11px;height:11px;background:#6a005f"></div>
<div style="left:1066px;top:160px;width:11px;height:11px;background:#a40062"></div>
<div style="left:1078px;top:160px;width:11px;height:11px;background:#a20038"></div>
<div style="left:1090px;top:160px;width:11px;height:11px;background:#7f0000"></div>
<div style="left:1102px;top:160px;width:11px;height:11px;background:#823100"></div>
<div style="left:1114px;top:160px;width:11px;height:11px;background:#845400"></div>
<div style="left:1126px;top:160px;width:11px;height:11px;background:#837c00"></div>
<div style="left:1138px;top:160px;width:11px;height:11px;background:#476b00"></div>
<div style="left:1150px;top:160px;width:11px;height:11px;background:#005a1c"></div>
<div style="left:1162px;top:160px;width:11px;height:11px;background:#00572a"></div>
<div style="left:1174px;top:160px;width:11px;height:11px;background:#005b58"></div>
<div style="left:1186px;top:160px;width:11px;height:11px;background:#005c8a"></div>
<div style="left:1198px;top:160px;width:11px;height:11px;background:#00386e"></div>
<div style="left:1210px;top:160px;width:11px;height:11px;background:#001d58"></div>
<div style="left:1222px;top:160px;width:11px;height:11px;background:#000052"></div>
<div style="left:1018px;top:172px;width:11px;height:11px;background:#2e004e"></div>
<div style="left:1030px;top:172px;width:11px;height:11px;background:#4c004a"></div>
<div style="left:1042px;top:172px;width:11px;height:11px;background:#7f0041"></div>
<div style="left:1054px;top:172px;width:11px;height:11px;background:#7d0022"></div>
<div style="left:1066px;top:172px;width:11px;height:11px;background:#d4c1a1"></div>
<div style="left:1078px;top:172px;width:11px;height:11px;background:#a89479"></div>
<div style="left:1090px;top:172px;width:11px;height:11px;background:#7f6b5c"></div>
<div style="left:1102px;top:172px;width:11px;height:11px;background:#594a3e"></div>
<div style="left:1114px;top:172px;width:11px;height:11px;background:#362f2d"></div>
<div style="left:1126px;top:172px;width:11px;height:11px;background:#c9a36a"></div>
<div style="left:1138px;top:172px;width:11px;height:11px;background:#b38851"></div>
<div style="left:1150px;top:172px;width:11px;height:11px;background:#986c37"></div>
<div style="left:1162px;top:172px;width:11px;height:11px;background:#815327"></div>
<div style="left:1174px;top:172px;width:11px;height:11px;background:#6a3a0e"></div>
<div style="left:1186px;top:172px;width:11px;height:11px;background:#ffffff"></div>
<div style="left:1018px;top:436px;width:240px;height:1px;background:#2e2e2e"></div>
<div style="left:1018px;top:437px;width:240px;height:18px;background:#535353;border-top:1px solid #656565"></div>
<svg style="left:1190px;top:442px;" width="10" height="10" viewBox="0 0 10 10"><path d="M3 0H10V10H3z" fill="#b4b4b4"/><path d="M0 6L4 10V6z" fill="#cfcfcf"/></svg>
<svg style="left:1218px;top:440px;" width="11" height="12" viewBox="0 0 11 12"><path d="M4 1H7V2H10.5V3.5H0.5V2H4z" fill="#b0b0b0"/><path d="M1.5 4.5H9.5L9 11.5H2z" fill="#b0b0b0"/><path d="M3.5 5.5V10.5M5.5 5.5V10.5M7.5 5.5V10.5" stroke="#535353" stroke-width="0.8"/></svg>
<svg style="left:1246px;top:443px;" width="12" height="11" viewBox="0 0 12 11"><rect x="10" y="1" width="1" height="1" fill="#777"/><rect x="8" y="3" width="1" height="1" fill="#777"/><rect x="10" y="3" width="1" height="1" fill="#777"/><rect x="6" y="5" width="1" height="1" fill="#777"/><rect x="8" y="5" width="1" height="1" fill="#777"/><rect x="10" y="5" width="1" height="1" fill="#777"/><rect x="4" y="7" width="1" height="1" fill="#777"/><rect x="6" y="7" width="1" height="1" fill="#777"/><rect x="8" y="7" width="1" height="1" fill="#777"/><rect x="10" y="7" width="1" height="1" fill="#777"/><rect x="2" y="9" width="1" height="1" fill="#777"/><rect x="4" y="9" width="1" height="1" fill="#777"/><rect x="6" y="9" width="1" height="1" fill="#777"/><rect x="8" y="9" width="1" height="1" fill="#777"/><rect x="10" y="9" width="1" height="1" fill="#777"/></svg>
<div style="left:1018px;top:455px;width:240px;height:3px;background:#2e2e2e"></div>
<div style="left:1018px;top:458px;width:240px;height:17px;background:#393939;border-top:1px solid #454545"></div>
<div style="left:1018px;top:458px;width:37px;height:18px;background:#535353;border-top:1px solid #606060"></div>
<div style="left:1056px;top:458px;width:37px;height:17px;background:#3d3d3d;border-top:1px solid #4a4a4a;border-right:1px solid #2e2e2e"></div>
<div class="t" style="left:1026px;top:460px;color:#ececec;font-size:12px">调整</div>
<div class="t" style="left:1063px;top:460px;color:#a8a8a8;font-size:12px">样式</div>
<svg style="left:1240px;top:463px;" width="14" height="8" viewBox="0 0 14 8"><path d="M0 2.5H5.5L2.75 5.8z" fill="#c0c0c0"/><path d="M6 0.5H14M6 2.5H14M6 4.5H14M6 6.5H14" stroke="#c8c8c8" stroke-width="1"/></svg>
<div style="left:1018px;top:475px;width:240px;height:112px;background:#535353"></div>
<div style="left:1055px;top:475px;width:203px;height:1px;background:#5e5e5e"></div>
<div class="t" style="left:1028px;top:481px;color:#cdcdcd;font-size:12px">添加调整</div>
<svg style="left:1066px;top:504px;" width="17" height="18" viewBox="0 0 17 18"><circle cx="8.5" cy="9" r="4.2" fill="none" stroke="#9a9a9a" stroke-width="1.2"/><path d="M8.5 4.8V13.2A4.2 4.2 0 0 1 8.5 4.8z" fill="#9a9a9a"/><path d="M8.5 0V2.5M8.5 15.5V18M0 9H2.5M14.5 9H17M2.3 2.8L4 4.5M13 13.5L14.7 15.2M2.3 15.2L4 13.5M13 4.5L14.7 2.8" stroke="#9c9c9c" stroke-width="1.6"/></svg>
<svg style="left:1090px;top:507px;" width="18" height="12" viewBox="0 0 18 12"><path d="M0.5 11.5V3.5H1.5V8L3 5V2.5H4V7L5.5 4.5V1.5H6.5V6L8 3.5V0.5H9V5.5L10.5 3V1.5H11.5V6L13 4V1.5H14V6.5L15.5 4.5V2.5H16.5V6.5H17.5V11.5z" fill="#8e8e8e"/></svg>
<svg style="left:1115px;top:507px;" width="16" height="14" viewBox="0 0 16 14"><rect x="0.5" y="0.5" width="15" height="13" fill="#5e5e5e" stroke="#8e8e8e"/><path d="M0.5 5H15.5M0.5 9.5H15.5M5.5 0.5V13.5M10.5 0.5V13.5" stroke="#8e8e8e" stroke-width="0.8"/><path d="M0.5 13.5C7 13.5 7 0.5 15.5 0.5" fill="none" stroke="#aaaaaa" stroke-width="1.2"/><rect x="0" y="-1" width="16" height="1" fill="#333"/></svg>
<svg style="left:1139px;top:507px;" width="16" height="14" viewBox="0 0 16 14"><rect x="0.5" y="0.5" width="15" height="13" fill="#5c5c5c" stroke="#8e8e8e"/><path d="M1 1H15L1 13z" fill="#8e8e8e"/><path d="M2.5 4.5H6.5M4.5 2.5V6.5" stroke="#3a3a3a" stroke-width="1.1"/><path d="M9.5 10H13.5" stroke="#a8a8a8" stroke-width="1.1"/><rect x="0" y="-1" width="16" height="1" fill="#333"/></svg>
<div style="left:1163px;top:505px;width:16px;height:16px;clip-path:polygon(0 0,100% 0,50% 100%);background:radial-gradient(circle at 50% 30%,#6a6a6a,#8e8e8e 60%)"></div>
<svg style="left:1055px;top:533px;" width="16" height="14" viewBox="0 0 16 14"><defs><linearGradient id="hs" x1="0" x2="1"><stop offset="0" stop-color="#4a4a4a"/><stop offset="1" stop-color="#9a9a9a"/></linearGradient></defs><rect x="0.5" y="0.5" width="15" height="13" fill="#7a7a7a" stroke="#8e8e8e"/><rect x="1" y="7" width="14" height="6" fill="url(#hs)"/><path d="M3.5 1V7M7.5 1V7M11.5 1V7" stroke="#5a5a5a" stroke-width="1.2"/><rect x="0" y="-1" width="16" height="1" fill="#333"/></svg>
<svg style="left:1078px;top:532px;" width="17" height="16" viewBox="0 0 17 16"><path d="M8.5 2V7M2.5 4.5H14.5M2.5 4.5L0.5 11H4.5zM14.5 4.5L12.5 11H16.5z" fill="none" stroke="#8e8e8e" stroke-width="1.1"/><path d="M0.5 11A2 2 0 0 0 4.5 11zM12.5 11A2 2 0 0 0 16.5 11z" fill="#8e8e8e"/><path d="M6 1H11L8.5 4z" fill="#8e8e8e"/><path d="M5 5L8.5 7.5L12 5" fill="none" stroke="#8e8e8e" stroke-width="1.1"/></svg>
<svg style="left:1103px;top:533px;" width="16" height="14" viewBox="0 0 16 14"><defs><linearGradient id="bw" x1="0" x2="1"><stop offset="0" stop-color="#7a7a7a"/><stop offset="1" stop-color="#9a9a9a"/></linearGradient></defs><rect x="0.5" y="0.5" width="15" height="13" fill="url(#bw)" stroke="#8e8e8e"/><rect x="1.5" y="1.5" width="6" height="11" fill="#484848" stroke="#8e8e8e" stroke-width="0.8"/><rect x="0" y="-1" width="16" height="1" fill="#333"/></svg>
<svg style="left:1126px;top:532px;" width="18" height="17" viewBox="0 0 18 17"><rect x="0.5" y="2.5" width="13" height="9" fill="#7e7e7e"/><rect x="1.5" y="1" width="4" height="2" fill="#7e7e7e"/><circle cx="7" cy="7" r="2.6" fill="#666" stroke="#9a9a9a"/><circle cx="12" cy="11.5" r="5" fill="#8a8a8a" fill-opacity="0.75" stroke="#9a9a9a"/></svg>
<svg style="left:1150px;top:532px;" width="17" height="16" viewBox="0 0 17 16"><circle cx="8.5" cy="4.8" r="4.5" fill="#8a8a8a"/><circle cx="4.8" cy="11" r="4.5" fill="#8a8a8a"/><circle cx="12.2" cy="11" r="4.5" fill="#8a8a8a"/><path d="M6 7.5H11L8.5 12z" fill="#5a5a5a"/></svg>
<svg style="left:1175px;top:533px;" width="16" height="14" viewBox="0 0 16 14"><rect x="0.5" y="0.5" width="15" height="13" fill="#7a7a7a" stroke="#8e8e8e"/><path d="M0.5 5H15.5M0.5 9H15.5M5.5 0.5V13.5M10.5 0.5V13.5" stroke="#535353" stroke-width="1.1"/><rect x="6" y="1" width="4" height="3.5" fill="#5c5c5c"/><rect x="11" y="5.5" width="4" height="3" fill="#5c5c5c"/><rect x="1" y="9.5" width="4" height="3.5" fill="#5c5c5c"/><rect x="0" y="-1" width="16" height="1" fill="#333"/></svg>
<svg style="left:1067px;top:561px;" width="16" height="13" viewBox="0 0 16 13"><rect x="0.5" y="0.5" width="15" height="12" fill="#8a8a8a" stroke="#8e8e8e"/><path d="M1 12L15 1V12z" fill="#6a6a6a"/><ellipse cx="8" cy="6.5" rx="4.5" ry="3.8" fill="#5a5a5a" transform="rotate(-35 8 6.5)"/><path d="M1 12L15 1" stroke="#9a9a9a" stroke-width="1"/><rect x="0" y="-1" width="16" height="1" fill="#333"/></svg>
<svg style="left:1091px;top:561px;" width="16" height="13" viewBox="0 0 16 13"><defs><linearGradient id="ps" x1="0" y1="0" x2="1" y2="1"><stop offset="0" stop-color="#5a5a5a"/><stop offset="0.3" stop-color="#9a9a9a"/><stop offset="0.5" stop-color="#5a5a5a"/><stop offset="0.7" stop-color="#9a9a9a"/><stop offset="1" stop-color="#5a5a5a"/></linearGradient></defs><rect x="0.5" y="0.5" width="15" height="12" fill="url(#ps)" stroke="#8e8e8e"/><rect x="0" y="-1" width="16" height="1" fill="#333"/></svg>
<svg style="left:1115px;top:561px;" width="16" height="13" viewBox="0 0 16 13"><rect x="0.5" y="0.5" width="15" height="12" fill="#8e8e8e" stroke="#8e8e8e"/><path d="M1 9.5H3.5V7.5H6V5.5H8.5V3.5H11V2H15V4H12.5V6H10V8H7.5V10H5V12H1z" fill="#3e3e3e"/><path d="M10 12H15V10H12.5z" fill="#3e3e3e"/><rect x="0" y="-1" width="16" height="1" fill="#333"/></svg>
<svg style="left:1139px;top:561px;" width="16" height="13" viewBox="0 0 16 13"><rect x="0.5" y="0.5" width="15" height="12" fill="#777" stroke="#8e8e8e"/><path d="M1 1L8 6.5L15 1zM1 12L8 6.5L15 12z" fill="#8e8e8e"/><path d="M1 1L15 12M15 1L1 12" stroke="#9a9a9a" stroke-width="0.8"/><rect x="0" y="-1" width="16" height="1" fill="#333"/></svg>
<svg style="left:1163px;top:561px;" width="16" height="13" viewBox="0 0 16 13"><defs><linearGradient id="gm"><stop offset="0" stop-color="#3a3a3a"/><stop offset="1" stop-color="#8e8e8e"/></linearGradient></defs><rect x="0.5" y="0.5" width="15" height="12" fill="url(#gm)" stroke="#8e8e8e"/><rect x="0" y="-1" width="16" height="1" fill="#333"/></svg>
<div style="left:1018px;top:587px;width:240px;height:3px;background:#2e2e2e"></div>
<div style="left:1018px;top:590px;width:240px;height:17px;background:#393939;border-top:1px solid #454545"></div>
<div style="left:1018px;top:590px;width:37px;height:18px;background:#535353;border-top:1px solid #606060"></div>
<div style="left:1056px;top:590px;width:37px;height:17px;background:#3d3d3d;border-top:1px solid #4a4a4a;border-right:1px solid #2e2e2e"></div>
<div style="left:1093px;top:590px;width:37px;height:17px;background:#3d3d3d;border-top:1px solid #4a4a4a;border-right:1px solid #2e2e2e"></div>
<div class="t" style="left:1026px;top:592px;color:#ececec;font-size:12px">图层</div>
<div class="t" style="left:1063px;top:592px;color:#a8a8a8;font-size:12px">通道</div>
<div class="t" style="left:1101px;top:592px;color:#a8a8a8;font-size:12px">路径</div>
<svg style="left:1240px;top:595px;" width="14" height="8" viewBox="0 0 14 8"><path d="M0 2.5H5.5L2.75 5.8z" fill="#c0c0c0"/><path d="M6 0.5H14M6 2.5H14M6 4.5H14M6 6.5H14" stroke="#c8c8c8" stroke-width="1"/></svg>
<div style="left:1018px;top:607px;width:240px;height:85px;background:#535353"></div>
<div style="left:1055px;top:607px;width:203px;height:1px;background:#5e5e5e"></div>
<div style="left:1022px;top:611px;width:71px;height:20px;background:linear-gradient(#5c5c5c,#525252);border:1px solid #3c3c3c;border-radius:3px;box-shadow:inset 0 1px 0 #646464"></div>
<svg style="left:1029px;top:615px;" width="10" height="10" viewBox="0 0 10 10"><circle cx="6" cy="4" r="3.2" fill="none" stroke="#9c9c9c" stroke-width="1.2"/><path d="M3.8 6.2L0.8 9.2" stroke="#9c9c9c" stroke-width="1.6"/></svg>
<div class="t" style="left:1045px;top:613px;color:#d8d8d8;font-size:12px">类型</div>
<svg style="left:1083px;top:616px;" width="6" height="10" viewBox="0 0 6 10"><path d="M0 3.5L3 0.5L6 3.5z M0 6.5L3 9.5L6 6.5z" fill="#c4c4c4"/></svg>
<svg style="left:1114px;top:614px;" width="14" height="13" viewBox="0 0 14 13"><rect x="0.5" y="0.5" width="13" height="12" fill="none" stroke="#8e8e8e"/><path d="M2 10L5.5 6.5L7.5 8.5L9.5 6L12 10z" fill="#8e8e8e"/><circle cx="10" cy="3.5" r="1.2" fill="#8e8e8e"/></svg>
<svg style="left:1138px;top:614px;" width="12" height="12" viewBox="0 0 12 12"><circle cx="6" cy="6" r="5.5" fill="#8e8e8e"/><path d="M2.1 9.9L9.9 2.1A5.5 5.5 0 0 1 2.1 9.9z" fill="#5a5a5a"/></svg>
<svg style="left:1163px;top:614px;" width="11" height="12" viewBox="0 0 11 12"><path d="M0.5 0.5H10.5V3.5H9.5L9 1.8H6.5V10.5H8V11.5H3V10.5H4.5V1.8H2L1.5 3.5H0.5z" fill="#8e8e8e"/></svg>
<svg style="left:1187px;top:614px;" width="12" height="12" viewBox="0 0 12 12"><rect x="1.5" y="1.5" width="9" height="9" fill="none" stroke="#8e8e8e" stroke-width="1"/><rect x="0" y="0" width="3" height="3" fill="#8e8e8e"/><rect x="9" y="0" width="3" height="3" fill="#8e8e8e"/><rect x="0" y="9" width="3" height="3" fill="#8e8e8e"/><rect x="9" y="9" width="3" height="3" fill="#8e8e8e"/></svg>
<svg style="left:1211px;top:614px;" width="12" height="12" viewBox="0 0 12 12"><path d="M4.5 0.5H9L11.5 3V10.5H4.5z" fill="none" stroke="#8e8e8e"/><rect x="0" y="5" width="6" height="7" fill="#8e8e8e"/></svg>
<div style="left:1245px;top:612px;width:10px;height:18px;background:#3e3e3e;border:1px solid #333;border-radius:2px"></div>
<div style="left:1246px;top:613px;width:8px;height:8px;background:#6a6a6a;border-radius:1px"></div>
<div style="left:1018px;top:633px;width:240px;height:1px;background:#3a3a3a"></div>
<div style="left:1018px;top:634px;width:240px;height:1px;background:#5c5c5c"></div>
<div style="left:1022px;top:639px;width:111px;height:20px;background:linear-gradient(#5c5c5c,#525252);border:1px solid #3c3c3c;border-radius:3px;box-shadow:inset 0 1px 0 #646464"></div>
<div class="t" style="left:1031px;top:642px;color:#d8d8d8;font-size:12px">正常</div>
<svg style="left:1123px;top:644px;" width="6" height="10" viewBox="0 0 6 10"><path d="M0 3.5L3 0.5L6 3.5z M0 6.5L3 9.5L6 6.5z" fill="#c4c4c4"/></svg>
<div class="t" style="left:1141px;top:642px;color:#c8c8c8;font-size:12px">不透明度:</div>
<div style="left:1198px;top:639px;width:56px;height:20px;background:#484848;border:1px solid #3c3c3c;border-radius:3px"></div>
<div style="left:1233px;top:640px;width:20px;height:18px;background:#575757;border-left:1px solid #3c3c3c;border-radius:0 2px 2px 0"></div>
<svg style="left:1240px;top:648px;" width="6" height="3" viewBox="0 0 6 3"><path d="M0 0H6L3 3z" fill="#c4c4c4"/></svg>
<div style="left:1018px;top:662px;width:240px;height:1px;background:#3a3a3a"></div>
<div style="left:1018px;top:663px;width:240px;height:1px;background:#5c5c5c"></div>
<div class="t" style="left:1025px;top:669px;color:#c8c8c8;font-size:12px">锁定:</div>
<svg style="left:1062px;top:672px;" width="11" height="11" viewBox="0 0 11 11"><rect x="0" y="0" width="11" height="11" fill="#8a8a8a"/><rect x="1" y="1" width="3" height="3" fill="#5e5e5e"/><rect x="7" y="1" width="3" height="3" fill="#5e5e5e"/><rect x="4" y="4" width="3" height="3" fill="#5e5e5e"/><rect x="1" y="7" width="3" height="3" fill="#5e5e5e"/><rect x="7" y="7" width="3" height="3" fill="#5e5e5e"/></svg>
<svg style="left:1082px;top:670px;" width="16" height="14" viewBox="0 0 16 14"><path d="M15.5 0.5L8 8" stroke="#8e8e8e" stroke-width="1.8" stroke-linecap="round"/><path d="M8 7.5C5 7.5 3 10 0.5 13C4 13 7.5 12.5 9 10z" fill="#8e8e8e"/></svg>
<svg style="left:1105px;top:670px;" width="14" height="14" viewBox="0 0 14 14"><path d="M7 1V13M1 7H13" stroke="#8e8e8e" stroke-width="1.2"/><path d="M4.5 3.5L7 1L9.5 3.5M4.5 10.5L7 13L9.5 10.5M3.5 4.5L1 7L3.5 9.5M10.5 4.5L13 7L10.5 9.5" fill="none" stroke="#8e8e8e" stroke-width="1.2"/></svg>
<svg style="left:1128px;top:670px;" width="12" height="14" viewBox="0 0 12 14"><path d="M3 6V4A3 3 0 0 1 9 4V6" fill="none" stroke="#8e8e8e" stroke-width="1.6"/><rect x="1" y="6" width="10" height="8" fill="#8e8e8e"/><rect x="5.3" y="8.5" width="1.4" height="3" fill="#535353"/></svg>
<div class="t" style="left:1165px;top:669px;color:#c8c8c8;font-size:12px">填充:</div>
<div style="left:1198px;top:668px;width:56px;height:19px;background:#484848;border:1px solid #3c3c3c;border-radius:3px"></div>
<div style="left:1233px;top:669px;width:20px;height:17px;background:#575757;border-left:1px solid #3c3c3c;border-radius:0 2px 2px 0"></div>
<svg style="left:1240px;top:676px;" width="6" height="3" viewBox="0 0 6 3"><path d="M0 0H6L3 3z" fill="#c4c4c4"/></svg>
<div style="left:1018px;top:691px;width:240px;height:1px;background:#333"></div>
<div style="left:1018px;top:692px;width:224px;height:236px;background:#474747"></div>
<div style="left:1242px;top:692px;width:16px;height:236px;background:linear-gradient(90deg,#333 0,#333 1px,#3b3b3b 1px,#414141 45%,#414141 70%,#3b3b3b)"></div>
<svg style="left:1072px;top:878px;" width="40" height="44" viewBox="0 0 40 44"><path d="M20 1L38.5 11.5V32.5L20 43L1.5 32.5V11.5z" fill="#ffffff" stroke="#fff" stroke-width="2" stroke-linejoin="round"/><path d="M13 11V33M13 23L26 11M17 19.5L27 33" stroke="#474747" stroke-width="3.6" fill="none"/></svg>
<div class="t" style="left:1117px;top:876px;font:bold 27px/34px 'Liberation Sans',sans-serif;color:#fff;letter-spacing:0px;transform:scale(1.025,1.12);transform-origin:0 4px">酷易软件园</div>
<div class="t" style="left:1118px;top:910px;font:10.5px/12px 'Liberation Sans',sans-serif;color:#fff;letter-spacing:0.9px;transform:scale(1.12,1.05);transform-origin:0 0;-webkit-text-stroke:0.3px #fff">WWW.KUYISOFT.COM</div>
<div style="left:278px;top:129px;width:515px;height:346px;background:rgba(0,0,0,0.35);border-radius:8px;filter:blur(1px)"></div>
<div style="left:279px;top:130px;width:513px;height:344px;background:linear-gradient(100deg,#50565d 0%,#3a4046 12%,#2b3037 22%,#2c3137 50%,#464c53 56%,#363c42 62%,#3a4046 74%,#52585e 86%,#474d53 100%);border:1px solid #a4aab0;border-radius:6px"></div>
<div style="left:280px;top:150px;width:511px;height:323px;background:linear-gradient(180deg,rgba(38,44,52,0) 0px,rgba(38,44,52,0.45) 40px,#262c34 140px);border-radius:0 0 5px 5px"></div>
<div style="left:280px;top:131px;width:60px;height:34px;border-top-left-radius:5px;background:radial-gradient(ellipse 30px 17px at 18px 12px,rgba(235,238,242,0.6),rgba(200,205,210,0.25) 55%,rgba(0,0,0,0) 100%)"></div>
<div class="t" style="left:286px;top:137px;color:#000;font-size:12.5px">新建</div>
<div style="left:738px;top:130px;width:49px;height:20px;border:1px solid #a0a6ac;border-top:none;border-radius:0 0 4px 4px;background:rgba(255,255,255,0.03);box-shadow:inset 0 -1px 0 #5a6066, 0 1px 0 #2a2f35"></div>
<svg style="left:759px;top:135px;" width="10" height="9" viewBox="0 0 10 9"><path d="M1 1L9 8M9 1L1 8" stroke="#f0f0f0" stroke-width="2.3"/></svg>
<div style="left:284px;top:157px;width:503px;height:312px;background:#ececec;border:1px solid #b4b9be;box-shadow:inset 0 0 0 1px #1e2328,inset 0 0 0 2px #fafafa"></div>
<div style="left:297px;top:201px;width:351px;height:253px;border:1px solid #a0a0a0;box-shadow:1px 1px 0 #fff, inset 1px 1px 0 #fff"></div>
<div style="left:312px;top:196px;width:325px;height:10px;background:#ececec"></div>
<div class="t" style="right:835px;top:172px;color:#000;font-size:12px;letter-spacing:0.3px">名称(N):</div>
<div style="left:427px;top:169px;width:224px;height:20px;background:#fff;border:1px solid #d5dae0;border-top-color:#a8a8a8;border-radius:2px"></div>
<div class="t" style="left:432px;top:173px;color:#000;font-size:12px;letter-spacing:0.3px">条形码</div>
<div class="t" style="right:879px;top:199px;color:#000;font-size:12px;letter-spacing:0.3px">预设(P):</div>
<div style="left:382px;top:193px;width:250px;height:24px;background:#fff;border:1px solid #d5dae0;border-top-color:#a8a8a8;border-radius:2px"></div>
<div class="t" style="left:389px;top:200px;color:#000;font-size:12px;letter-spacing:0.3px">自定</div>
<svg style="left:620px;top:204px;" width="8" height="5" viewBox="0 0 8 5"><path d="M0 0H8L4 4.5z" fill="#000"/></svg>
<div class="t" style="right:835px;top:230px;color:#a6a6a6">大小(I):</div>
<div style="left:427px;top:225px;width:198px;height:22px;background:#ececec;border:1px solid #a0a0a0;border-radius:3px;box-shadow:inset 0 0 0 1px #f8f8f8"></div>
<div style="left:606px;top:227px;width:17px;height:18px;background:#fff"></div>
<svg style="left:613px;top:235px;" width="8" height="5" viewBox="0 0 8 5"><path d="M0 0H8L4 4.5z" fill="#a8a8a8"/></svg>
<div class="t" style="right:835px;top:260px;color:#000;font-size:12px;letter-spacing:0.3px">宽度(W):</div>
<div style="left:427px;top:256px;width:98px;height:21px;background:#fff;border:1px solid #d5dae0;border-top-color:#a8a8a8;border-radius:2px"></div>
<div class="t" style="left:433px;top:261px;color:#000;font-size:12px;letter-spacing:0.3px">250</div>
<div style="left:529px;top:256px;width:96px;height:21px;background:#fff;border:1px solid #d5dae0;border-top-color:#a8a8a8;border-radius:2px"></div>
<div class="t" style="left:535px;top:261px;color:#000;font-size:12px;letter-spacing:0.3px">像素</div>
<svg style="left:613px;top:265px;" width="8" height="5" viewBox="0 0 8 5"><path d="M0 0H8L4 4.5z" fill="#000"/></svg>
<div class="t" style="right:835px;top:290px;color:#000;font-size:12px;letter-spacing:0.3px">高度(H):</div>
<div style="left:427px;top:286px;width:98px;height:21px;background:#fff;border:1px solid #d5dae0;border-top-color:#a8a8a8;border-radius:2px"></div>
<div class="t" style="left:433px;top:291px;color:#000;font-size:12px;letter-spacing:0.3px">150</div>
<div style="left:529px;top:286px;width:96px;height:21px;background:#fff;border:1px solid #d5dae0;border-top-color:#a8a8a8;border-radius:2px"></div>
<div class="t" style="left:535px;top:291px;color:#000;font-size:12px;letter-spacing:0.3px">像素</div>
<svg style="left:613px;top:295px;" width="8" height="5" viewBox="0 0 8 5"><path d="M0 0H8L4 4.5z" fill="#000"/></svg>
<div class="t" style="right:835px;top:320px;color:#000;font-size:12px;letter-spacing:0.3px">分辨率(R):</div>
<div style="left:427px;top:316px;width:98px;height:21px;background:#fff;border:1px solid #d5dae0;border-top-color:#a8a8a8;border-radius:2px"></div>
<div class="t" style="left:433px;top:321px;color:#000;font-size:12px;letter-spacing:0.3px">72</div>
<div style="left:529px;top:316px;width:96px;height:21px;background:#fff;border:1px solid #d5dae0;border-top-color:#a8a8a8;border-radius:2px"></div>
<div class="t" style="left:535px;top:321px;color:#000;font-size:12px;letter-spacing:0.3px">像素/英寸</div>
<svg style="left:613px;top:325px;" width="8" height="5" viewBox="0 0 8 5"><path d="M0 0H8L4 4.5z" fill="#000"/></svg>
<div class="t" style="right:835px;top:350px;color:#000;font-size:12px;letter-spacing:0.3px">颜色模式(M):</div>
<div style="left:427px;top:346px;width:94px;height:21px;background:#fff;border:1px solid #d5dae0;border-top-color:#a8a8a8;border-radius:2px"></div>
<div class="t" style="left:434px;top:350px;color:#000;font-size:12px;letter-spacing:0.3px">RGB 颜色</div>
<svg style="left:508px;top:354px;" width="8" height="5" viewBox="0 0 8 5"><path d="M0 0H8L4 4.5z" fill="#000"/></svg>
<div style="left:529px;top:346px;width:96px;height:21px;background:#fff;border:1px solid #d5dae0;border-top-color:#a8a8a8;border-radius:2px"></div>
<div class="t" style="left:535px;top:350px;color:#000;font-size:12px;letter-spacing:0.3px">8 位</div>
<svg style="left:613px;top:354px;" width="8" height="5" viewBox="0 0 8 5"><path d="M0 0H8L4 4.5z" fill="#000"/></svg>
<div class="t" style="right:835px;top:380px;color:#000;font-size:12px;letter-spacing:0.3px">背景内容(C):</div>
<div style="left:427px;top:376px;width:198px;height:21px;background:#fff;border:1px solid #d5dae0;border-top-color:#a8a8a8;border-radius:2px"></div>
<div class="t" style="left:434px;top:380px;color:#000;font-size:12px;letter-spacing:0.3px">白色</div>
<svg style="left:613px;top:384px;" width="8" height="5" viewBox="0 0 8 5"><path d="M0 0H8L4 4.5z" fill="#000"/></svg>
<div style="left:318px;top:418px;width:15px;height:15px;border-radius:50%;background:radial-gradient(circle at 50% 35%,#ffffff,#f0f0f0 55%,#cfcfcf);border:1px solid #c8c8c8;box-shadow:0 1px 1px rgba(0,0,0,0.15)"></div>
<svg style="left:321px;top:421px;" width="9" height="9" viewBox="0 0 9 9"><path d="M1 1L4.5 4L8 1M1 5L4.5 8L8 5" fill="none" stroke="#111" stroke-width="1.6"/></svg>
<div class="t" style="left:340px;top:418px;color:#000;font-size:12px;letter-spacing:0.3px">高级</div>
<div style="left:370px;top:425px;width:246px;height:1px;background:#a8a8a8;box-shadow:0 1px 0 #fff"></div>
<div style="left:667px;top:170px;width:107px;height:18px;border:1px solid #3c9fd8;border-radius:3px;background:linear-gradient(#ebf6fd 0%,#dcf0fc 50%,#bfe4f9 51%,#a9d9f5 100%);box-shadow:inset 0 0 0 1px #6fd0f8,0 0 2px #4ec3f0"></div>
<div class="t" style="left:620px;width:200px;text-align:center;top:173px;color:#000;font-size:12px;letter-spacing:0.3px">确定</div>
<div style="left:667px;top:198px;width:107px;height:18px;border:1px solid #707070;border-radius:3px;background:linear-gradient(#f2f2f2 0%,#ebebeb 50%,#dddddd 51%,#cfcfcf 100%);box-shadow:inset 0 0 0 1px #fcfcfc"></div>
<div class="t" style="left:620px;width:200px;text-align:center;top:201px;color:#000;font-size:12px;letter-spacing:0.3px">取消</div>
<div style="left:667px;top:226px;width:107px;height:18px;border:1px solid #707070;border-radius:3px;background:linear-gradient(#f2f2f2 0%,#ebebeb 50%,#dddddd 51%,#cfcfcf 100%);box-shadow:inset 0 0 0 1px #fcfcfc"></div>
<div class="t" style="left:620px;width:200px;text-align:center;top:229px;color:#000;font-size:12px;letter-spacing:0.3px">存储预设(S)...</div>
<div style="left:667px;top:254px;width:107px;height:18px;border:1px solid #b8bcc0;border-radius:3px;background:#f4f4f4"></div>
<div class="t" style="left:620px;width:200px;text-align:center;top:257px;color:#8a8a8a">删除预设(D)...</div>
<div class="t" style="left:620px;width:200px;text-align:center;top:390px;color:#000;font-size:12px;letter-spacing:0.3px">图像大小:</div>
<div class="t" style="left:620px;width:200px;text-align:center;top:413px;color:#000;font-size:12px;letter-spacing:0.3px">109.9K</div>
</body></html>
